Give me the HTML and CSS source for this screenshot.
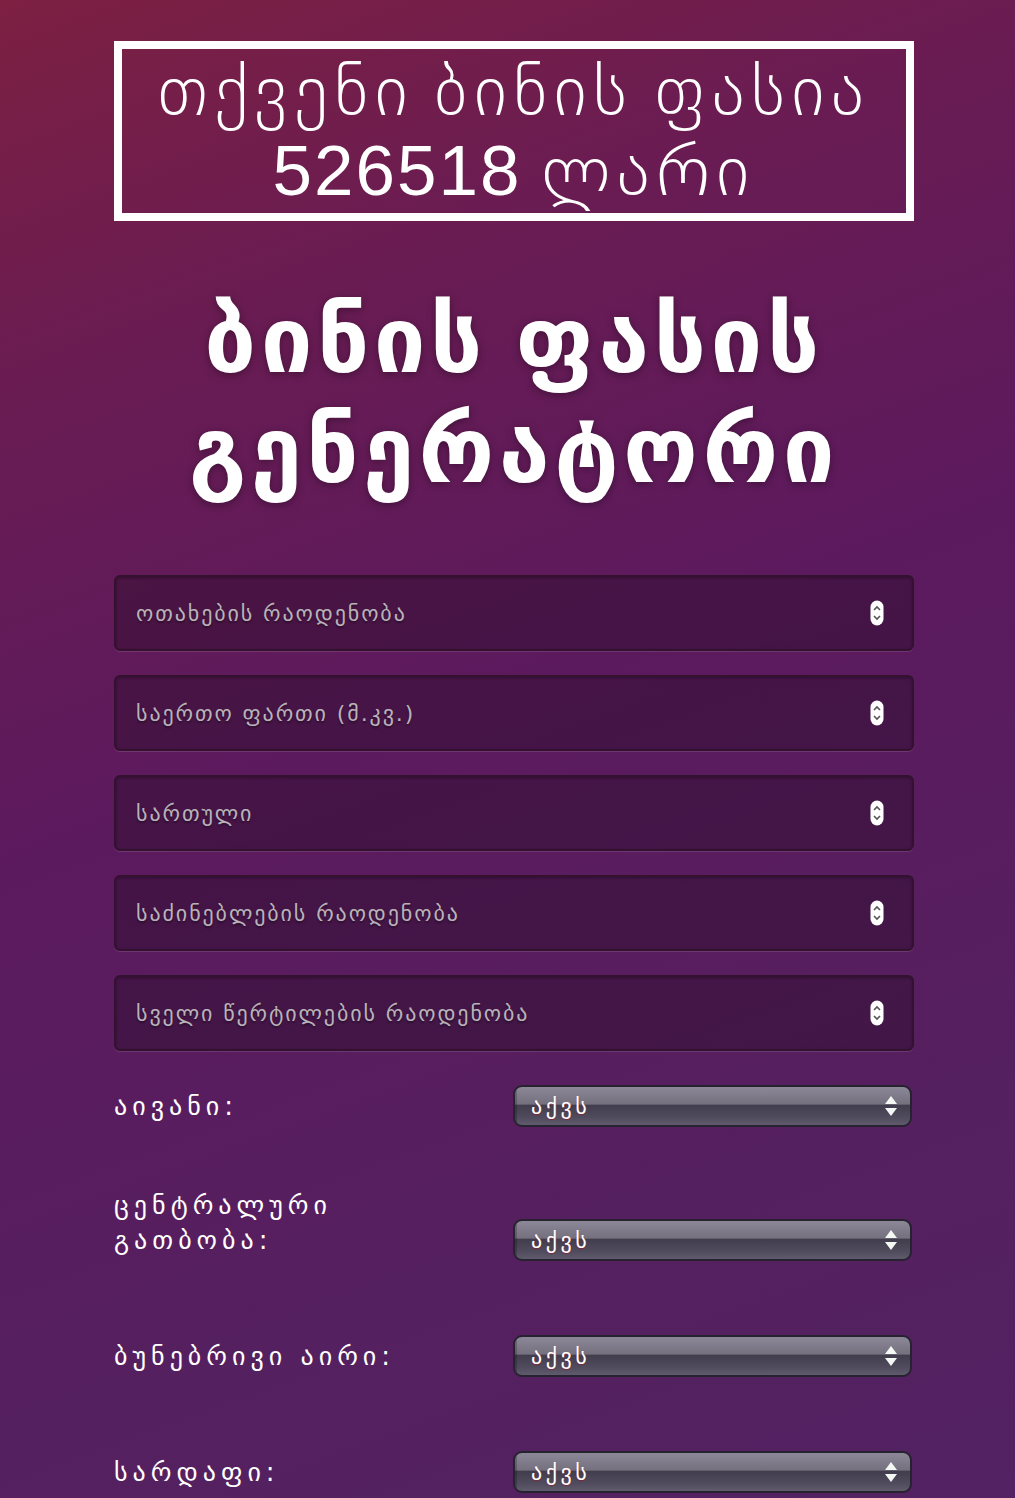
FILE: index.html
```html
<!DOCTYPE html>
<html lang="ka">
<head>
<meta charset="utf-8">
<title>ბინის ფასის გენერატორი</title>
<link rel="stylesheet" href="styles.css">
</head>
<body>
<div class="page">
  <div class="result">თქვენი ბინის ფასია <span class="num">526518</span> ლარი</div>
  <h1 class="title">ბინის ფასის გენერატორი</h1>
  <form class="form">
    <div class="field"><span class="placeholder">ოთახების რაოდენობა</span><span class="spin"><svg width="14" height="26" viewBox="0 0 14 26"><rect x="0.5" y="0.5" width="13" height="25" rx="6.5" fill="#fff"/><path d="M4 10 L7 7 L10 10 M4 16 L7 19 L10 16" fill="none" stroke="#555" stroke-width="1.6"/></svg></span></div>
    <div class="field"><span class="placeholder">საერთო ფართი (მ.კვ.)</span><span class="spin"><svg width="14" height="26" viewBox="0 0 14 26"><rect x="0.5" y="0.5" width="13" height="25" rx="6.5" fill="#fff"/><path d="M4 10 L7 7 L10 10 M4 16 L7 19 L10 16" fill="none" stroke="#555" stroke-width="1.6"/></svg></span></div>
    <div class="field"><span class="placeholder">სართული</span><span class="spin"><svg width="14" height="26" viewBox="0 0 14 26"><rect x="0.5" y="0.5" width="13" height="25" rx="6.5" fill="#fff"/><path d="M4 10 L7 7 L10 10 M4 16 L7 19 L10 16" fill="none" stroke="#555" stroke-width="1.6"/></svg></span></div>
    <div class="field"><span class="placeholder">საძინებლების რაოდენობა</span><span class="spin"><svg width="14" height="26" viewBox="0 0 14 26"><rect x="0.5" y="0.5" width="13" height="25" rx="6.5" fill="#fff"/><path d="M4 10 L7 7 L10 10 M4 16 L7 19 L10 16" fill="none" stroke="#555" stroke-width="1.6"/></svg></span></div>
    <div class="field field-last"><span class="placeholder">სველი წერტილების რაოდენობა</span><span class="spin"><svg width="14" height="26" viewBox="0 0 14 26"><rect x="0.5" y="0.5" width="13" height="25" rx="6.5" fill="#fff"/><path d="M4 10 L7 7 L10 10 M4 16 L7 19 L10 16" fill="none" stroke="#555" stroke-width="1.6"/></svg></span></div>

    <div class="row"><label class="label">აივანი:</label><div class="select"><span class="sel-text">აქვს</span><span class="arrows"><svg width="14" height="28" viewBox="0 0 14 28"><path d="M1 12 L7 4 L13 12 Z M1 16 L13 16 L7 24 Z" fill="#f4f8f4"/></svg></span></div></div>
    <div class="row"><label class="label">ცენტრალური გათბობა:</label><div class="select"><span class="sel-text">აქვს</span><span class="arrows"><svg width="14" height="28" viewBox="0 0 14 28"><path d="M1 12 L7 4 L13 12 Z M1 16 L13 16 L7 24 Z" fill="#f4f8f4"/></svg></span></div></div>
    <div class="row"><label class="label">ბუნებრივი აირი:</label><div class="select"><span class="sel-text">აქვს</span><span class="arrows"><svg width="14" height="28" viewBox="0 0 14 28"><path d="M1 12 L7 4 L13 12 Z M1 16 L13 16 L7 24 Z" fill="#f4f8f4"/></svg></span></div></div>
    <div class="row"><label class="label">სარდაფი:</label><div class="select"><span class="sel-text">აქვს</span><span class="arrows"><svg width="14" height="28" viewBox="0 0 14 28"><path d="M1 12 L7 4 L13 12 Z M1 16 L13 16 L7 24 Z" fill="#f4f8f4"/></svg></span></div></div>
  </form>
</div>
</body>
</html>
```
FILE: styles.css
```css
html, body {
  margin: 0;
  padding: 0;
}
body {
  min-height: 1498px;
  background: linear-gradient(160deg, #7d2042 0%, #6a1c52 20%, #5c1a5e 45%, #55205f 75%, #522262 100%);
  font-family: "DejaVu Sans", sans-serif;
  color: #fff;
}
.page {
  width: 800px;
  margin-left: 114px;
  padding-top: 41px;
}
.result {
  border: 8px solid #fff;
  padding: 2px 0 2px;
  text-align: center;
  font-family: "Liberation Sans", "DejaVu Sans", sans-serif;
  font-weight: 200;
  font-size: 71px;
  line-height: 80px;
  letter-spacing: 6.3px;
  word-spacing: -6px;
}
.num {
  letter-spacing: 2px;
}
.title {
  margin: 65px 0 69px;
  text-align: center;
  font-family: "DejaVu Sans", sans-serif;
  font-weight: bold;
  font-size: 92px;
  line-height: 110px;
  letter-spacing: 4.5px;
  word-spacing: -8px;
  text-shadow: 0 2px 8px rgba(0,0,0,0.35);
}
.form {
  display: flex;
  flex-direction: column;
}
.field {
  height: 76px;
  margin-bottom: 24px;
  box-sizing: border-box;
  border: 2px solid #33112f;
  border-radius: 6px;
  background: rgba(35, 10, 35, 0.38);
  box-shadow: 0 1px 0 rgba(255,255,255,0.12), inset 0 1px 3px rgba(0,0,0,0.3);
  display: flex;
  align-items: center;
  justify-content: space-between;
  padding: 0 28px 0 20px;
}
.field-last {
  margin-bottom: 21px;
}
.placeholder {
  color: #b9b3b9;
  font-size: 22px;
  letter-spacing: 1.9px;
  text-shadow: 0 2px 2px rgba(0,0,0,0.35);
}
.spin {
  display: flex;
}
.row {
  display: flex;
  align-items: flex-end;
  margin-bottom: 61px;
}
.label {
  width: 300px;
  flex: none;
  margin-right: 99px;
  font-size: 26px;
  line-height: 35px;
  letter-spacing: 5px;
  padding-bottom: 3px;
}
.select {
  margin-top: 13px;
  width: 399px;
  height: 42px;
  box-sizing: border-box;
  border: 2px solid #27222f;
  border-radius: 9px;
  background: linear-gradient(#8c8898 0%, #74707e 45%, #413d4d 48%, #504c5d 80%, #5f5b6c 100%);
  box-shadow: inset 28px 0 0 -26px rgba(0,0,0,0.2);
  display: flex;
  align-items: center;
  justify-content: space-between;
  padding: 0 12px 0 16px;
}
.sel-text {
  font-size: 22px;
  color: #fff;
  letter-spacing: 3.5px;
  text-shadow: 0 1px 1px rgba(140,30,50,0.8);
}
.arrows {
  display: flex;
}
```
